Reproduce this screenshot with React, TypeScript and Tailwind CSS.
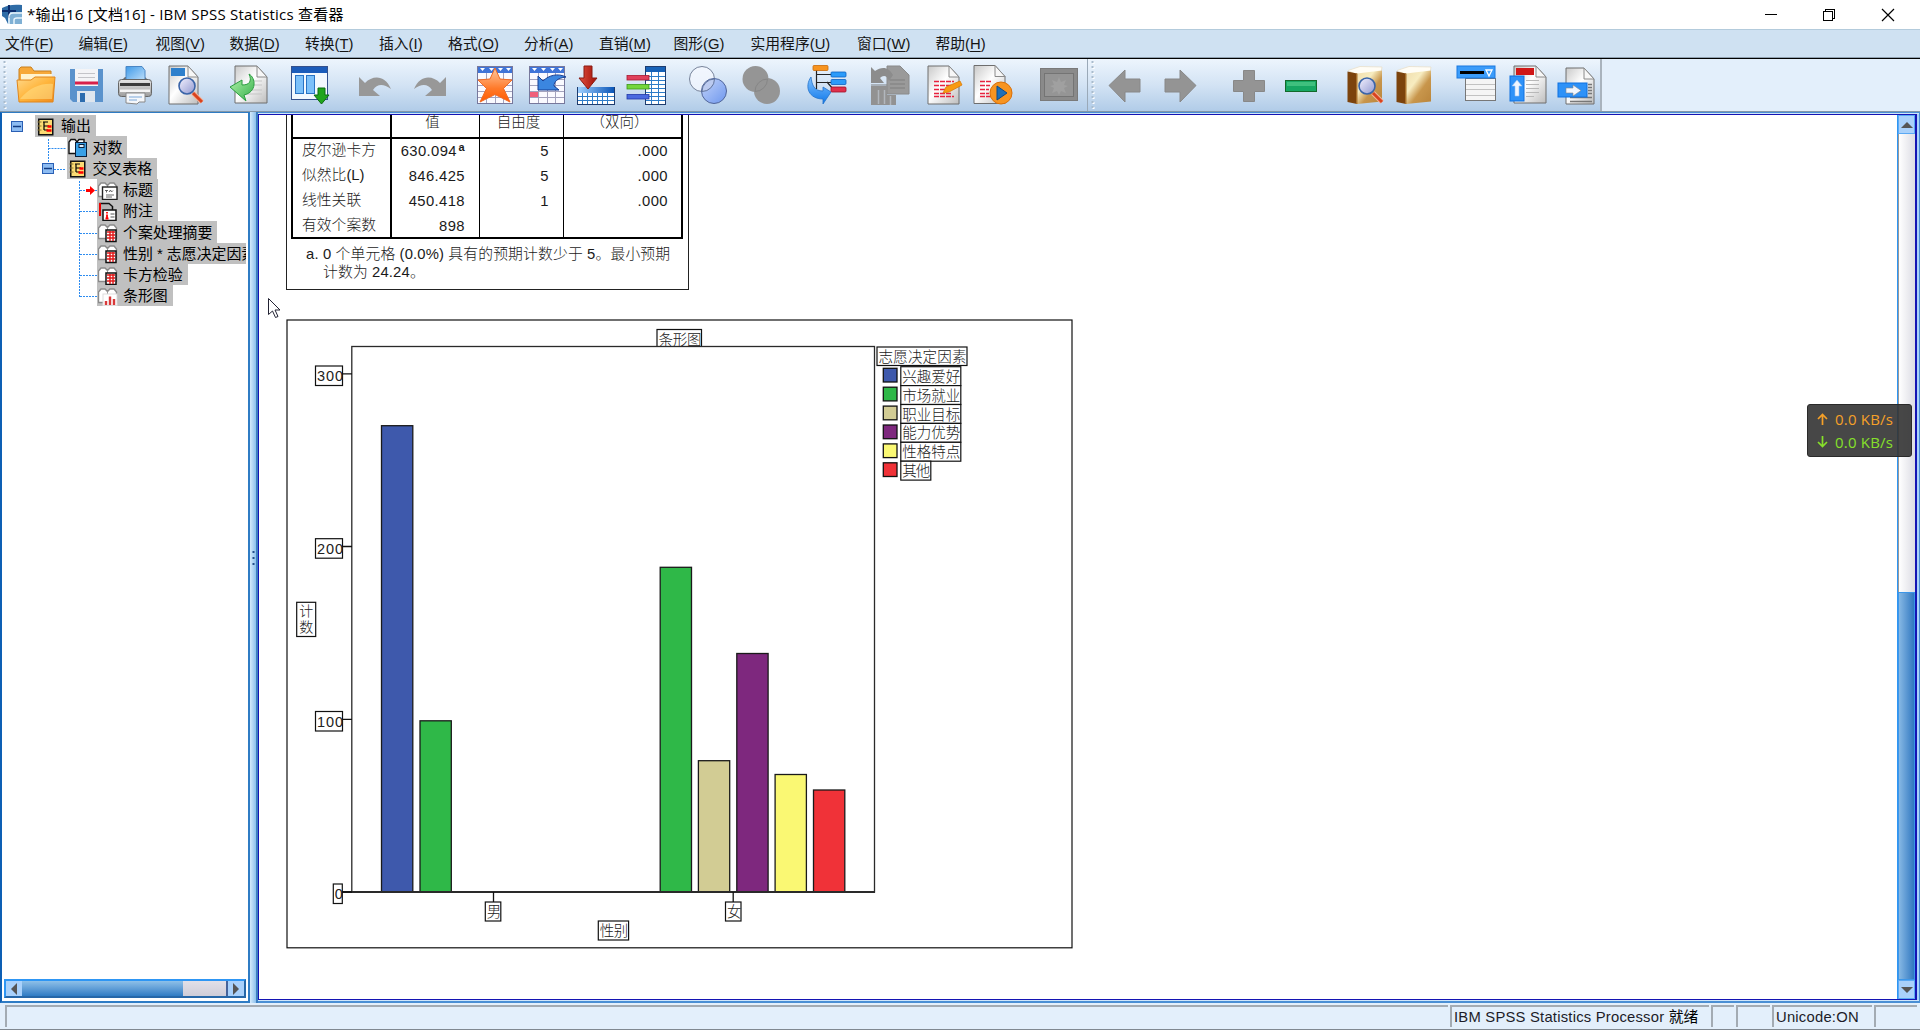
import React from "react";

const SANS = "font-['Liberation_Sans','Noto_Sans_CJK_SC',sans-serif]";

/* ---------- shared gradients ---------- */
function Defs() {
  return (
    <svg width="0" height="0" className="absolute">
      <defs>
        <linearGradient id="orange" x1="0" y1="0" x2="1" y2="1">
          <stop offset="0" stopColor="#ffd88a" />
          <stop offset="0.5" stopColor="#ffb53c" />
          <stop offset="1" stopColor="#f08a1c" />
        </linearGradient>
        <linearGradient id="star" x1="0" y1="0" x2="0" y2="1">
          <stop offset="0" stopColor="#ffc9a0" />
          <stop offset="0.6" stopColor="#ff7a2a" />
          <stop offset="1" stopColor="#ff5a00" />
        </linearGradient>
        <linearGradient id="page" x1="0" y1="0" x2="1" y2="1">
          <stop offset="0" stopColor="#c9c9c9" />
          <stop offset="0.45" stopColor="#ffffff" />
          <stop offset="1" stopColor="#bdbdbd" />
        </linearGradient>
        <linearGradient id="blue" x1="0" y1="0" x2="1" y2="0">
          <stop offset="0" stopColor="#9fd0ff" />
          <stop offset="1" stopColor="#0b56b8" />
        </linearGradient>
        <linearGradient id="blueV" x1="0" y1="0" x2="0" y2="1">
          <stop offset="0" stopColor="#7fc0ff" />
          <stop offset="1" stopColor="#0f78ea" />
        </linearGradient>
        <linearGradient id="paperBlue" x1="0" y1="0" x2="1" y2="1">
          <stop offset="0" stopColor="#3f9ae8" />
          <stop offset="1" stopColor="#c4e2fb" />
        </linearGradient>
        <linearGradient id="metal" x1="0" y1="0" x2="0" y2="1">
          <stop offset="0" stopColor="#e6e6e6" />
          <stop offset="1" stopColor="#9c9c9c" />
        </linearGradient>
        <linearGradient id="lens" x1="0" y1="0" x2="1" y2="1">
          <stop offset="0" stopColor="#f4f2ff" />
          <stop offset="1" stopColor="#8f97d0" />
        </linearGradient>
        <linearGradient id="gold" x1="0" y1="0" x2="1" y2="1">
          <stop offset="0" stopColor="#f0deae" />
          <stop offset="0.35" stopColor="#f7ecc0" />
          <stop offset="0.6" stopColor="#c8964c" />
          <stop offset="1" stopColor="#b9843a" />
        </linearGradient>
        <linearGradient id="green" x1="0" y1="0" x2="1" y2="1">
          <stop offset="0" stopColor="#b9f5b0" />
          <stop offset="1" stopColor="#34b04a" />
        </linearGradient>
        <linearGradient id="red" x1="0" y1="0" x2="1" y2="0">
          <stop offset="0" stopColor="#e05040" />
          <stop offset="1" stopColor="#a01008" />
        </linearGradient>
        <linearGradient id="circle" x1="0" y1="0" x2="1" y2="1">
          <stop offset="0" stopColor="#c4d4fa" />
          <stop offset="1" stopColor="#6d97ee" />
        </linearGradient>
      </defs>
    </svg>
  );
}

function Ico({ ml = "", children }: { ml?: string; children: React.ReactNode }) {
  return (
    <svg width="40" height="40" viewBox="0 0 40 40" className={"shrink-0 " + ml}>
      {children}
    </svg>
  );
}

const Page = ({ x = 5, y = 2, w = 28, h = 36 }) => (
  <>
    <path
      d={`M${x} ${y}h${w - 10}l10 11v${h - 11}h${-w}z`}
      fill="url(#page)"
      stroke="#6e6e6e"
      strokeWidth="1"
    />
    <path d={`M${x + w - 10} ${y}v11h10z`} fill="#f7f7f7" stroke="#8a8a8a" strokeWidth="1" />
  </>
);

const Magnifier = ({ x = 20, y = 20 }) => (
  <g>
    <path d={`M${x + 6} ${y + 7}l9 9`} stroke="#f3b49a" strokeWidth="5" />
    <path d={`M${x + 6} ${y + 7}l9 9`} stroke="#d9431e" strokeWidth="3" />
    <circle cx={x} cy={y} r="8" fill="url(#lens)" stroke="#3a64a8" strokeWidth="1.6" />
  </g>
);

const DataGrid = ({ red = false }) => (
  <>
    <rect x="2.5" y="1.5" width="35" height="37" fill="#fafaff" stroke="#77789c" />
    <rect x="3" y="2" width="34" height="6" fill="#3f74d8" />
    <path d="M5 3h5l-2.500 3zM14 3h5l-2.500 3zM23 3h5l-2.500 3zM31 3h5l-2.500 3z" fill="#fff" />
    <path
      d="M3 14.500h34M3 20.500h34M3 26.500h34M3 32.500h34M11.500 8v30M20.500 8v30M28.500 8v30"
      stroke="#a3a3bd"
      fill="none"
    />
    {red && <rect x="3" y="27" width="8" height="5" fill="#f0607a" />}
  </>
);

const BookShape = () => (
  <>
    <path d="M3 5.500L15 1.500l22 .5-1 6-24 2z" fill="#fffdf6" stroke="#e8dfca" strokeWidth=".8" />
    <path d="M12 8.500l25-3v31l-25 2.500z" fill="url(#gold)" />
    <path d="M2.500 6.500L12 8.500V39l-9.500-2z" fill="#7c430c" />
    <path d="M11 8.500h1.500V39H11z" fill="#a8702c" />
  </>
);

function MainIcons() {
  return (
    <>
      <Ico ml="ml-[9px]">
        <path d="M3 4l2-2h10l3 4h17v10H3z" fill="#f7a93a" stroke="#c9801e" />
        <path d="M5 9h31v7H5z" fill="#fff3cf" />
        <path d="M1 15h14l4-3h20l-2 25H3z" fill="url(#orange)" stroke="#e0861c" />
        <path d="M4 34c10-12 22-16 33-15l-1 15z" fill="#ffe08a" opacity=".55" />
      </Ico>
      <Ico ml="ml-[10px]">
        <path d="M4 4h33v33H7l-3-3z" fill="#5a92cc" />
        <rect x="9" y="4" width="23" height="17" fill="#f4f4f6" />
        <path d="M12 8.500h17M12 12.500h17" stroke="#c4c4c8" />
        <rect x="9" y="16.500" width="23" height="3" fill="#d8204a" />
        <rect x="11" y="26" width="18" height="11" fill="#dfe6ee" />
        <rect x="14" y="28" width="5" height="9" fill="#2c6cae" />
      </Ico>
      <Ico ml="ml-[9px]">
        <path d="M10 12l-5 5h30l-5-5" fill="#6a6a6a" />
        <path d="M11 1.500h16l3 4v11H11z" fill="url(#paperBlue)" stroke="#4a86c4" />
        <rect x="3.500" y="14.500" width="33" height="17" rx="3" fill="url(#metal)" stroke="#666" />
        <rect x="5" y="18" width="30" height="3" fill="#3a3a3a" />
        <rect x="5" y="24.500" width="30" height="2.500" fill="#f4f4f4" />
        <path d="M11 28h19v9h-6l-2 2-11-1z" fill="#f5f7fa" stroke="#888" />
        <path d="M14 32h13M14 35h8" stroke="#7aa7d8" />
      </Ico>
      <Ico ml="ml-[11px]">
        <Page x={3} y={1} w={29} h={38} />
        <rect x="5" y="3" width="14" height="8" fill="#2f80cc" />
        <Magnifier x={21} y={21} />
      </Ico>
      <Ico ml="ml-[23px]">
        <Page x={6} y={1} w={32} h={37} />
        <path d="M20 16h13M20 20h13M16 25h17M16 29h17" stroke="#c5c5c5" />
        <path
          d="M1 22l12-7v5c8 0 10-4 7-11 7 4 8 18-5 21l2 6z"
          fill="url(#green)"
          stroke="#2c9c40"
        />
      </Ico>
      <Ico ml="ml-[21px]">
        <rect x="1.500" y="1.500" width="36" height="33" fill="#f3f8fe" stroke="#35518c" />
        <rect x="2" y="2" width="35" height="6" fill="#1c5cba" />
        <rect x="5.500" y="10.500" width="8" height="18" fill="#7cc0fa" stroke="#2a73c4" />
        <rect x="16.500" y="10.500" width="8" height="18" fill="#7cc0fa" stroke="#2a73c4" />
        <path d="M28 23h7v7h4l-7.500 9-7.500-9h4z" fill="#21a51c" stroke="#0b6a10" />
      </Ico>
      <Ico ml="ml-[25px]">
        <path d="M4 12l6 6c8-8 20-8 26 6-8-6-14-5-18 1l7 6H4z" fill="#989898" />
      </Ico>
      <Ico ml="ml-[15px]">
        <path d="M36 12l-6 6c-8-8-20-8-26 6 8-6 14-5 18 1l-7 6h21z" fill="#989898" />
      </Ico>
      <Ico ml="ml-[25px]">
        <DataGrid />
        <path
          d="M20 3l5 11 12 1-8.500 8.500L35 37l-15-7.500L5 37l6.500-13.500L3 15l12-1z"
          fill="url(#star)"
          stroke="#f06a24"
        />
      </Ico>
      <Ico ml="ml-[12px]">
        <DataGrid red />
        <path
          d="M11 11l5 5c6-6 15-8 23-4-9 1-12 5-12 9l5 4H11z"
          fill="#3b86e0"
          stroke="#173f94"
        />
      </Ico>
      <Ico ml="ml-[9px]">
        <rect x="1.500" y="22.500" width="37" height="17" fill="#fff" stroke="#1e3c6e" />
        <rect x="2" y="22" width="36" height="6" fill="url(#blue)" />
        <path d="M2 31.500h36M2 35.500h36" stroke="#2d7cc8" />
        <path d="M6.500 28v11M11.500 28v11M16.500 28v11M21.500 28v11M26.500 28v11M31.500 28v11" stroke="#2d7cc8" />
        <path d="M8 1h8v12h5l-9 11-9-11h5z" fill="url(#red)" stroke="#8a1a12" />
      </Ico>
      <Ico ml="ml-[10px]">
        <rect x="19.500" y="1.500" width="20" height="38" fill="#fff" stroke="#1e3c6e" />
        <rect x="20" y="2" width="19" height="5" fill="#1762b8" />
        <path
          d="M20 11.500h19M20 15.500h19M20 19.500h19M20 23.500h19M20 27.500h19M20 31.500h19M20 35.500h19M25.500 7v32M32.500 7v32"
          stroke="#2d7cc8"
        />
        <rect x="1" y="10.500" width="22" height="4.500" fill="#e0405c" stroke="#a81830" strokeWidth=".8" />
        <rect x="1" y="19.500" width="22" height="4.500" fill="#74d63c" stroke="#3c9a18" strokeWidth=".8" />
        <rect x="1" y="29.500" width="22" height="4.500" fill="#4a6ae0" stroke="#2238a8" strokeWidth=".8" />
      </Ico>
      <Ico ml="ml-[22px]">
        <circle cx="14" cy="14" r="12.500" fill="#f5f8ff" fillOpacity=".75" stroke="#77839a" />
        <circle cx="26" cy="26" r="12.500" fill="url(#circle)" stroke="#50659a" />
        <path d="M14 26.500A12.500 12.500 0 0 1 26.500 14A12.500 12.500 0 0 1 14 26.500z" fill="#bccbf0" stroke="#61749c" />
      </Ico>
      <Ico ml="ml-[13px]">
        <circle cx="14.500" cy="14" r="13" fill="#959595" />
        <circle cx="26" cy="26" r="13" fill="#959595" />
        <path d="M14 26.500A12.500 12.500 0 0 1 26.500 14A12.500 12.500 0 0 1 14 26.500z" fill="none" stroke="#868686" />
      </Ico>
      <Ico ml="ml-[26px]">
        <path d="M4 12c-7 10-2 22 12 22v5l8-12-8-5v4C7 26 5 20 4 12z" fill="url(#blueV)" stroke="#2272cc" strokeWidth=".8" />
        <path d="M9.500 5v19M9 9.500h16M9 17.500h16M20 17l6 7" stroke="#222" strokeWidth="1.200" fill="none" />
        <rect x="6" y=".5" width="15" height="5" rx="1" fill="#f79420" stroke="#c96a08" strokeWidth=".8" />
        <rect x="24" y="7" width="15" height="5" rx="1" fill="#2b9bfa" stroke="#0d62c0" strokeWidth=".8" />
        <rect x="24" y="14.500" width="15" height="5" rx="1" fill="#2b9bfa" stroke="#0d62c0" strokeWidth=".8" />
        <rect x="24" y="22" width="15" height="5" rx="1" fill="#e0304c" stroke="#a01028" strokeWidth=".8" />
      </Ico>
      <Ico ml="ml-[23px]">
        <path d="M17 1h13l9 9v19H17z" fill="#9a9a9a" stroke="#8a8a8a" />
        <path d="M1 2l4 4c7-5 14-4 18 4l-4 6c-2-6-6-6-9-3l4 5H1z" fill="#8c8c8c" />
        <path d="M1 20h16M20 15h15M20 19h15M20 23h15" stroke="#7e7e7e" />
        <path d="M1 21h16v9h9v10H1z" fill="#929292" />
        <path d="M8.500 25v14M14.500 25v14M20.500 31v9" stroke="#b2b7bd" strokeWidth="1.500" />
      </Ico>
      <Ico ml="ml-[15px]">
        <Page x={3} y={1} w={31} h={38} />
        <path d="M9 16.500h20M9 20.500h17M9 24.500h12M9 28.500h17M9 31.500h20" stroke="#e8213f" strokeWidth="1.600" strokeDasharray="5 1" />
        <path d="M18 28l3-6 14-6 2 4-13 7z" fill="#f89a12" stroke="#d97a08" strokeWidth=".8" />
      </Ico>
      <Ico ml="ml-[8px]">
        <Page x={1} y={0.5} w={31} h={38} />
        <path d="M7 16.500h12M7 20.500h10M7 24.500h9M7 28.500h9M7 31.500h12" stroke="#e8213f" strokeWidth="1.600" strokeDasharray="5 1" />
        <circle cx="28" cy="28" r="11" fill="#f79420" stroke="#d9700a" />
        <path d="M24 21l10 7-10 7z" fill="#1d6fb8" stroke="#0d4a88" />
      </Ico>
      <Ico ml="ml-[26px]">
        <rect x="1.500" y="3.500" width="37" height="32" fill="#8a8a8a" stroke="#7a7a7a" />
        <rect x="5.500" y="8.500" width="29" height="23" fill="#959595" stroke="#747474" />
        <path d="M20 12l2 5 5-2-2 5 4 1-4 2 2 5-5-2-2 4-2-4-5 2 2-5-4-2 4-1-2-5 5 2z" fill="#a0a0a0" />
      </Ico>
    </>
  );
}

function NavIcons() {
  return (
    <>
      <Ico ml="ml-[10px]">
        <path d="M4 20.500L20 5v9h15v13H20v10z" fill="#949494" stroke="#888" />
      </Ico>
      <Ico ml="ml-[15px]">
        <path d="M36 20.500L20 5v9H5v13h15v10z" fill="#949494" stroke="#888" />
      </Ico>
      <Ico ml="ml-[29px]">
        <path d="M14.500 5.500h11v10h10v11h-10v10h-11v-10h-10v-11h10z" fill="#949494" stroke="#888" />
      </Ico>
      <Ico ml="ml-[12px]">
        <rect x="4.500" y="15.500" width="31" height="11" fill="#17a763" stroke="#14692a" />
        <rect x="6" y="17" width="28" height="4" fill="#3fc07e" />
      </Ico>
      <Ico ml="ml-[24px]">
        <BookShape />
        <Magnifier x={22} y={21} />
      </Ico>
      <Ico ml="ml-[9px]">
        <BookShape />
      </Ico>
      <Ico ml="ml-[22px]">
        <rect x="9.500" y="13.500" width="30" height="22" fill="#f5f5f5" stroke="#777" />
        <path d="M10 19.500h29M10 24.500h29M10 30.500h29" stroke="#c2c2c2" />
        <rect x="1" y="1" width="38" height="12" fill="#3b9cfa" stroke="#1a78e0" />
        <rect x="4" y="6" width="24" height="3" fill="#000" />
        <path d="M30 5h6l-3 6z" fill="none" stroke="#fff" strokeWidth="1.300" />
      </Ico>
      <Ico ml="ml-[12px]">
        <Page x={6} y={1} w={32} h={37} />
        <rect x="8" y="3" width="18" height="7" fill="#d01818" />
        <path d="M18 15.500h13M18 19.500h13M18 23.500h13M18 27.500h13M18 31.500h8" stroke="#b8b8b8" />
        <rect x="2" y="11" width="14" height="25" fill="#2e92f8" stroke="#0f70e0" />
        <path d="M9 15l5 6h-3v10H7V21H4z" fill="#f0f6ff" stroke="#9cc4f0" strokeWidth=".6" />
      </Ico>
      <Ico ml="ml-[8px]">
        <Page x={10} y={3} w={28} h={36} />
        <path d="M14 32.500h22M14 36.500h22M32 19.500h4M32 22.500h4M32 25.500h4M32 28.500h4" stroke="#777" strokeWidth="1.300" />
        <rect x="2" y="18" width="29" height="14" fill="#2e92f8" stroke="#0f70e0" />
        <path d="M10 23h7v-3l8 5.500-8 5.500v-3h-7z" fill="#f0f6ff" stroke="#888" strokeWidth=".6" />
      </Ico>
    </>
  );
}

/* ---------- window chrome ---------- */
function TitleBar() {
  return (
    <div className="flex h-[29px] shrink-0 items-center bg-white">
      <svg width="21" height="21" viewBox="0 0 21 21" className="ml-[2px] mb-px shrink-0">
        <path d="M0 4c5-3 12-4 20-3v19H6L3 14 0 12z" fill="#2f6ca6" />
        <path d="M6 8h14v12H6z" fill="#7fb0d4" />
        <path d="M7 1v13M0 7h14" stroke="#0c2d6c" strokeWidth="2" />
        <path d="M7 20V13q0-4 4-4h9M12 20v-4q0-2 3-2h5" stroke="#e8f4fc" strokeWidth="1.500" fill="none" />
      </svg>
      <span className="ml-[4px] whitespace-pre pb-px font-['Open_Sans','Noto_Sans_CJK_SC',sans-serif] text-[15px] leading-5 tracking-[.22px] text-black">
        *输出16 [文档16] - IBM SPSS Statistics 查看器
      </span>
      <svg width="134" height="14" viewBox="0 0 134 14" className="ml-auto mr-[24px]" fill="none" stroke="#000" shapeRendering="crispEdges">
        <path d="M3 6.500h12" />
        <rect x="61.500" y="3.500" width="9" height="9" />
        <path d="M63.500 3.500v-2h9v9h-2" />
        <path d="M120 1l12 12M132 1l-12 12" shapeRendering="auto" strokeWidth="1.200" />
      </svg>
    </div>
  );
}

function MenuItem({ w, label, k }: { w: string; label: string; k: string }) {
  return (
    <span className={"shrink-0 whitespace-nowrap " + w}>
      {label}(<span className="underline underline-offset-2">{k}</span>)
    </span>
  );
}

function MenuBar() {
  return (
    <div className={"flex h-[30px] shrink-0 items-center border-t border-b border-t-[#b3cbdc] border-b-black bg-[#cfe1f2] pl-[5px] text-[14.8px] text-[#141414] shadow-[inset_0_-1px_0_#8fa0b0] " + SANS}>
      <MenuItem w="w-[73.5px]" label="文件" k="F" />
      <MenuItem w="w-[77px]" label="编辑" k="E" />
      <MenuItem w="w-[74px]" label="视图" k="V" />
      <MenuItem w="w-[75.5px]" label="数据" k="D" />
      <MenuItem w="w-[74px]" label="转换" k="T" />
      <MenuItem w="w-[69px]" label="插入" k="I" />
      <MenuItem w="w-[76px]" label="格式" k="O" />
      <MenuItem w="w-[75px]" label="分析" k="A" />
      <MenuItem w="w-[74.5px]" label="直销" k="M" />
      <MenuItem w="w-[77px]" label="图形" k="G" />
      <MenuItem w="w-[106.5px]" label="实用程序" k="U" />
      <MenuItem w="w-[78.5px]" label="窗口" k="W" />
      <MenuItem w="w-[60px]" label="帮助" k="H" />
    </div>
  );
}

const Grip = () => (
  <svg width="7" height="50" viewBox="0 0 7 50" className="shrink-0">
    <path d="M5.500 2v48" stroke="#fff" strokeWidth="2" strokeDasharray="2 3" />
    <path d="M4.500 1v48" stroke="#a9bccd" strokeWidth="2" strokeDasharray="2 3" />
  </svg>
);

function Toolbar() {
  return (
    <div className="flex h-[53px] shrink-0 border-b border-[#8497a8] bg-[#e3effb]">
      <div className="flex h-[52px] w-[1088px] shrink-0 items-center border-r border-[#9aa9b8] bg-linear-to-b from-[#edf5fd] via-[#d3e3f4] to-[#b1cce8]">
        <Grip />
        <MainIcons />
      </div>
      <div className="flex h-[52px] w-[514px] shrink-0 items-center border-r-2 border-[#a9b3bd] bg-linear-to-b from-[#edf5fd] via-[#d3e3f4] to-[#b1cce8]">
        <Grip />
        <NavIcons />
      </div>
    </div>
  );
}

/* ---------- outline tree ---------- */
type Kind = "root" | "log" | "title" | "note" | "table" | "chart";

function TreeIcon({ kind }: { kind: Kind }) {
  const book = (
    <>
      <path d="M.5 15.500V5l2.500-3h4l2.500 2.500L12 2h4l2.500 3v10.500z" fill="#fff" stroke="#8a8a8a" strokeWidth="1.400" />
      <path d="M9.500 4.500v11" stroke="#9a9a9a" />
    </>
  );
  return (
    <svg width="20" height="20" viewBox="0 0 20 20" className="shrink-0">
      {kind === "root" && (
        <>
          <rect x="2" y="1.500" width="15.500" height="17" fill="#111" />
          <rect x="3.500" y="3" width="12.500" height="14" fill="#fbdc74" />
          <path d="M7 5h5M8 5v8M8 9h5M8 13h4" stroke="#000" strokeWidth="1.200" fill="none" />
          <path d="M11.500 9.500h4M10.500 13.500h5" stroke="#f00" strokeWidth="2.400" />
          <path d="M1.500 5h4M1.500 9h4M1.500 13h4" stroke="#8a7430" />
        </>
      )}
      {kind === "log" && (
        <>
          <path d="M1 15.500V4l2-2.500h4l2 2.500 2-2.500h5v14z" fill="#fff" stroke="#111" strokeWidth="1.400" />
          <rect x="7.500" y="4.500" width="11" height="14" fill="#38a0e6" stroke="#0a1e38" />
          <rect x="11" y="6.500" width="5" height="3" fill="#dff0ff" stroke="#0a1e38" />
        </>
      )}
      {kind === "title" && (
        <>
          {book}
          <rect x="4.500" y="6" width="14.500" height="12.500" fill="#fff" stroke="#222" strokeWidth="1.400" />
          <path d="M7 9.500h3M8.500 9.500v2M11 11l1.500-2 1 2 1.500-1.500M8 14h8M8 16h6" stroke="#555" fill="none" strokeWidth=".9" />
        </>
      )}
      {kind === "note" && (
        <>
          <path d="M2 14V1.500h9l3.500 3V9" fill="#b5b5b5" stroke="#111" strokeWidth="1.500" />
          <path d="M2 1v13" stroke="#e00" strokeWidth="2" />
          <rect x="5" y="8" width="13" height="10.500" fill="#fff" stroke="#111" strokeWidth="1.500" />
          <path d="M9 10v1.500M9 12.500v4M7.500 16.500h3" stroke="#f00" strokeWidth="1.800" />
          <path d="M12.500 12h4M12.500 15h4" stroke="#555" />
        </>
      )}
      {kind === "table" && (
        <>
          {book}
          <rect x="8" y="7" width="10" height="11.500" fill="#fff" stroke="#111" strokeWidth="1.500" />
          <path d="M9 9h8M12 8v10M9 12h8M9 15h8M15 8v10" stroke="#e01818" strokeWidth="1.400" />
        </>
      )}
      {kind === "chart" && (
        <>
          {book}
          <rect x="5" y="7" width="14" height="11.500" fill="#fff" stroke="#ddd" />
          <path d="M8 18v-4M12 18V9.500M16 18v-6" stroke="#d83a3a" strokeWidth="2.400" />
        </>
      )}
    </svg>
  );
}

function TreeRow({ pad, kind, text }: { pad: string; kind: Kind; text: string }) {
  return (
    <div className={"flex h-[21.25px] " + pad}>
      <div className="flex h-[21.5px] shrink-0 items-center whitespace-nowrap bg-[#c0c0c0] pl-[1px] pr-[5px] pt-[2px] text-[14.9px] leading-none text-black">
        <TreeIcon kind={kind} />
        <span className="ml-[5px]">{text}</span>
      </div>
    </div>
  );
}

const HANDLE = "bg-[#a9d1fb]";

function OutlinePane() {
  return (
    <div className={"relative flex w-[250px] shrink-0 flex-col border-2 border-t border-[#2f7cc4] border-l-[#0d5fb4] bg-white " + SANS}>
      <div className="mr-[2px] mt-[2px] overflow-hidden">
        <TreeRow pad="pl-[33px]" kind="root" text="输出" />
        <TreeRow pad="pl-[64.500px]" kind="log" text="对数" />
        <TreeRow pad="pl-[64.500px]" kind="root" text="交叉表格" />
        <TreeRow pad="pl-[95px]" kind="title" text="标题" />
        <TreeRow pad="pl-[95px]" kind="note" text="附注" />
        <TreeRow pad="pl-[95px]" kind="table" text="个案处理摘要" />
        <TreeRow pad="pl-[95px]" kind="table" text="性别 * 志愿决定因素" />
        <TreeRow pad="pl-[95px]" kind="table" text="卡方检验" />
        <TreeRow pad="pl-[95px]" kind="chart" text="条形图" />
      </div>
      <svg width="110" height="200" viewBox="0 112 110 200" className="absolute left-[-2px] top-0" fill="none">
        <g stroke="#2d8cf0" strokeDasharray="2 1" strokeWidth="1">
          <path d="M48.500 138v24M48.500 147.500h18M54 168.500h12M79.500 180v116" />
          <path d="M80 189.500h17M80 210.500h17M80 232.500h17M80 253.500h17M80 274.500h17M80 295.500h17" />
        </g>
        <g stroke="#2a5fb4" fill="#8dbcf2">
          <rect x="11.500" y="120.500" width="11" height="10" />
          <rect x="42.500" y="162.500" width="11" height="10" />
        </g>
        <path d="M13 125.500h8M44 167.500h8" stroke="#123a80" strokeWidth="1.500" />
        <path d="M86 188h4v-3l5 4.500-5 4.500v-3h-4z" fill="#f00" />
      </svg>
      <div className="mb-[3px] ml-[2px] mr-[2px] mt-auto flex h-[19px] border-2 border-[#2e96f4] border-b-[#2667a8] border-r-[#2667a8]">
        <div className={"flex w-[16px] items-center justify-center " + HANDLE}>
          <svg width="8" height="12" viewBox="0 0 8 12"><path d="M7 0v12L1 6z" fill="#555" /></svg>
        </div>
        <div className="w-[161px] bg-linear-to-b from-[#8ec0e8] to-[#2f7cc4]" />
        <div className="flex-1 border-r-2 border-[#45639a] bg-linear-to-b from-[#e2e0e8] to-[#cfcdd8]" />
        <div className={"flex w-[16px] items-center justify-center " + HANDLE}>
          <svg width="8" height="12" viewBox="0 0 8 12"><path d="M1 0v12l6-6z" fill="#555" /></svg>
        </div>
      </div>
    </div>
  );
}

/* ---------- pivot table ---------- */
const ROWS: [string, string, string, string][] = [
  ["皮尔逊卡方", "630.094", "5", ".000"],
  ["似然比(L)", "846.425", "5", ".000"],
  ["线性关联", "450.418", "1", ".000"],
  ["有效个案数", "898", "", ""],
];
const COLS = "grid grid-cols-[99px_88px_84px_1fr]";

function ChiSquareTable() {
  return (
    <div className={"ml-[27px] h-[175px] w-[403px] border border-t-0 border-[#222] pl-[4px] pr-[5px] text-[14.8px] leading-none text-[#1a1a1a] " + SANS}>
      <div className="h-[123.5px] border-2 border-t-0 border-black">
        <div className={COLS + " h-[24px] border-b-2 border-black text-center text-[14.500px] font-light text-[#222]"}>
          <div className="border-r-2 border-black" />
          <div className="border-r border-black pr-[6px]">值</div>
          <div className="border-r border-black pr-[6px]">自由度</div>
          <div className="pr-[6px]">（双向）</div>
        </div>
        {ROWS.map(([name, v, df, sig], i) => (
          <div key={name} className={COLS + (i === 3 ? " h-[22.5px]" : " h-[25px]") + " text-right tracking-[.4px]"}>
            <div className="border-r-2 border-black pl-[9px] pt-[4px] text-left">
              <span className="font-light tracking-[0]">{name}</span>
            </div>
            <div className={"relative border-r border-black pt-[5px] " + (i === 0 ? "pr-[22px]" : "pr-[14px]")}>
              {v}
              {i === 0 && <span className="absolute right-[14px] top-[1px] text-[11px] font-bold leading-[14px]">a</span>}
            </div>
            <div className="border-r border-black pr-[14px] pt-[5px]">{df}</div>
            <div className="pr-[13px] pt-[5px]">{sig}</div>
          </div>
        ))}
      </div>
      <div className="whitespace-nowrap pl-[15px] pt-[6px] font-light leading-[18.500px] tracking-[.15px]">
        <div>a. 0 个单元格 (0.0%) 具有的预期计数少于 5。最小预期</div>
        <div className="pl-[17px]">计数为 24.24。</div>
      </div>
    </div>
  );
}

/* ---------- clustered bar chart ---------- */
const BARS: [number, number, string][] = [
  [381.5, 425.7, "#3e59ac"],
  [420, 720.8, "#2fb848"],
  [660.2, 567.3, "#2fb848"],
  [698.4, 760.7, "#d2cc94"],
  [736.8, 653.5, "#7e287e"],
  [775.1, 774.5, "#faf873"],
  [813.5, 790, "#f03238"],
];
const LEGEND: [string, string, number][] = [
  ["兴趣爱好", "#3e59ac", 60],
  ["市场就业", "#2fb848", 60],
  ["职业目标", "#d2cc94", 60],
  ["能力优势", "#7e287e", 60],
  ["性格特点", "#faf873", 60],
  ["其他", "#f03238", 30],
];

function Label({ x, y, w, h, t, tw }: { x: number; y: number; w: number; h: number; t: string; tw: number }) {
  return (
    <g>
      <rect x={x} y={y} width={w} height={h} fill="#fff" stroke="#111" strokeWidth="1.200" />
      <text x={x + 1.5} y={y + 15} textLength={tw} fontSize="14.500" fill="#222" fontWeight="300">
        {t}
      </text>
    </g>
  );
}

function BarChart() {
  return (
    <svg
      width="788"
      height="630"
      viewBox="286 319 788 630"
      className={"ml-[27px] mt-[29px] block shrink-0 " + SANS}
      fill="none"
      stroke="none"
    >
      <rect x="287" y="320" width="785" height="627.800" stroke="#111" strokeWidth="1.200" />
      <Label x={657} y={329.5} w={44.5} h={19} t="条形图" tw={43} />
      <rect x="351.800" y="346.500" width="522.700" height="545.500" fill="#fff" stroke="#2a2a2a" strokeWidth="1.300" />
      {BARS.map(([x, y, c]) => (
        <rect key={x} x={x} y={y} width="31.300" height={892 - y} fill={c} stroke="#1a1a1a" strokeWidth="1.300" />
      ))}
      <path d="M342 892h533" stroke="#2a2a2a" strokeWidth="1.800" />
      <Label x={315.5} y={366} w={27} h={19.500} t="300" tw={26} />
      <Label x={315.5} y={538.700} w={27} h={19.500} t="200" tw={26} />
      <Label x={315.5} y={711.500} w={27} h={19.500} t="100" tw={26} />
      <Label x={333.3} y={884} w={9} h={19.500} t="0" tw={8} />
      <path d="M342 373.800h10M342 546.500h10M342 719.300h10M342 892h10M493.500 892v10M733.200 892v10" stroke="#111" strokeWidth="1.300" />
      <rect x="296.700" y="602.300" width="19" height="34.200" fill="#fff" stroke="#111" strokeWidth="1.200" />
      <g fontSize="14" fill="#222" fontWeight="300">
        <text x="299.200" y="616">计</text>
        <text x="299.200" y="631.500">数</text>
      </g>
      <Label x={485.3} y={902} w={15.500} h={19} t="男" tw={13} />
      <Label x={725.5} y={902} w={15.500} h={19} t="女" tw={13} />
      <Label x={598.3} y={921} w={30.300} h={19} t="性别" tw={28.500} />
      <Label x={877} y={347} w={90} h={18.500} t="志愿决定因素" tw={88} />
      {LEGEND.map(([t, c, w], i) => (
        <g key={t}>
          <rect x="883.300" y={368.3 + i * 18.9} width="13.700" height="13.700" fill={c} stroke="#111" strokeWidth="1.300" />
          <Label x={900.8} y={366.7 + i * 18.9} w={w} h={18.900} t={t} tw={w - 2} />
        </g>
      ))}
    </svg>
  );
}

function VerticalScrollbar() {
  return (
    <div className="flex w-[18px] shrink-0 flex-col border-l border-[#2e96f4]">
      <div className={"flex h-[19px] items-center justify-center border border-[#5aa9f4] " + HANDLE}>
        <svg width="12" height="8" viewBox="0 0 12 8"><path d="M0 7h12L6 1z" fill="#555" /></svg>
      </div>
      <div className="h-[458px] border-l border-[#999] bg-linear-to-r from-white to-[#dcdce4]" />
      <div className="flex-1 border border-[#3c96e8] bg-linear-to-r from-[#86b8e4] to-[#2f78c0]" />
      <div className={"flex h-[19px] items-center justify-center border border-[#5aa9f4] " + HANDLE}>
        <svg width="12" height="8" viewBox="0 0 12 8"><path d="M0 1h12L6 7z" fill="#555" /></svg>
      </div>
    </div>
  );
}

function ViewerPane() {
  return (
    <div className="flex min-w-0 flex-1 border-b-2 border-r border-t border-[#4a8fd4] bg-[#cfe6fa] pb-px pt-px">
      <div className="flex min-w-0 flex-1 border border-r-2 border-[#1414b4] bg-white">
        <div className="flex min-w-0 flex-1 flex-col">
          <ChiSquareTable />
          <BarChart />
        </div>
        <VerticalScrollbar />
      </div>
      <div className="w-[2px] bg-[#a9d1fb]" />
    </div>
  );
}

function Splitter() {
  return (
    <div className="flex w-[8px] shrink-0 items-center justify-center border-r-2 border-[#3c7fc0] bg-linear-to-r from-[#d4eafb] to-[#8cc0ec]">
      <svg width="5" height="18" viewBox="0 0 5 18">
        <path d="M1.500 2h2v2h-2zM1.500 8h2v2h-2zM1.500 14h2v2h-2z" fill="#24508c" />
      </svg>
    </div>
  );
}

function StatusBar() {
  const cell = "h-[22px] shrink-0 border-l-2 border-t-2 border-[#a3abb3] pl-[2px] leading-[20px] whitespace-nowrap ";
  return (
    <div className={"flex h-[27px] shrink-0 border-b border-[#808890] bg-[#e3effb] pl-[5px] pt-[2px] text-[14.8px] tracking-[.22px] text-[#1c1c28] " + SANS}>
      <div className={cell + "mr-[2px] w-[1443px]"} />
      <div className={cell + "mr-[2px] w-[259px]"}>
        IBM SPSS Statistics Processor <span className="tracking-[0] text-black">就绪</span>
      </div>
      <div className={cell + "mr-[2px] w-[23px]"} />
      <div className={cell + "mr-[2px] w-[34px]"} />
      <div className={cell + "mr-[2px] w-[100px]"}>Unicode:ON</div>
      <div className={cell + "w-[43px]"} />
    </div>
  );
}

function SpeedWidget() {
  return (
    <div className="absolute left-[1807px] top-[404px] flex h-[53px] w-[105px] flex-col justify-center rounded-[3px] border border-[#2a2a2a] bg-[#333]/90 pl-[9px] font-['Open_Sans',sans-serif] text-[15px] leading-[23px] tracking-[.2px]">
      <div className="flex items-center gap-[7px] text-[#f5a028]">
        <svg width="11" height="12" viewBox="0 0 11 12" fill="none" stroke="currentColor" strokeWidth="1.700">
          <path d="M5.500 12V1.500M1 6l4.500-4.500L10 6" />
        </svg>
        <span>0.0 KB/s</span>
      </div>
      <div className="flex items-center gap-[7px] text-[#86e02a]">
        <svg width="11" height="12" viewBox="0 0 11 12" fill="none" stroke="currentColor" strokeWidth="1.700">
          <path d="M5.500 0v10.500M1 6l4.500 4.500L10 6" />
        </svg>
        <span>0.0 KB/s</span>
      </div>
    </div>
  );
}

export default function App() {
  return (
    <div className="relative flex h-[1030px] w-[1920px] flex-col overflow-hidden bg-[#e3effb]">
      <Defs />
      <TitleBar />
      <MenuBar />
      <Toolbar />
      <div className="flex h-[891px] shrink-0">
        <OutlinePane />
        <Splitter />
        <ViewerPane />
      </div>
      <StatusBar />
      <SpeedWidget />
      <svg width="13" height="21" viewBox="0 0 13 21" className="absolute left-[268px] top-[298px]">
        <path d="M.5.500v16l4-3.500 3 6.500 2.500-1-3-6.500h5z" fill="#fff" stroke="#223" />
      </svg>
    </div>
  );
}
